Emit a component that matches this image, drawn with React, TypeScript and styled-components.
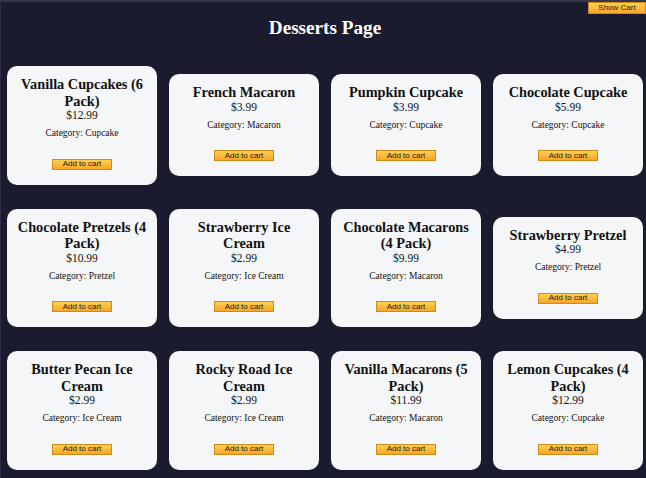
import React from "react";
import styled, { createGlobalStyle } from "styled-components";

const GlobalStyle = createGlobalStyle`
  html, body {
    margin: 0;
    padding: 0;
    background: #1b1b2f;
  }
  body {
    font-family: "Liberation Serif", "Times New Roman", serif;
  }
`;

const Page = styled.div`
  position: relative;
  box-sizing: border-box;
  width: 646px;
  min-height: 478px;
  background: #1b1b2f;
  border-top: 2px solid #35354b;
  border-left: 1px solid #2c2c42;
  padding: 0 3px 0 6px;
`;

const Heading = styled.h1`
  margin: 14.5px 0 27.5px;
  font-family: "Liberation Serif", "Times New Roman", serif;
  font-weight: bold;
  font-size: 19.2px;
  line-height: 22px;
  color: #ffffff;
  text-align: center;
`;

const OrangeButton = styled.button`
  box-sizing: border-box;
  margin: 0;
  padding: 0;
  border: 1px solid #cf8a19;
  background: linear-gradient(#ffd04f, #f7a52a);
  color: #222;
  font-family: "Liberation Sans", Arial, sans-serif;
  font-size: 8px;
  line-height: 1;
  cursor: pointer;
  display: flex;
  align-items: center;
  justify-content: center;
`;

const CartButton = styled(OrangeButton)`
  position: absolute;
  top: 0;
  right: 0;
  width: 58px;
  height: 12px;
`;

const Grid = styled.div`
  display: grid;
  grid-template-columns: repeat(4, 150px);
  column-gap: 12px;
  row-gap: 24px;
  align-items: center;
`;

const Card = styled.div`
  box-sizing: border-box;
  width: 150px;
  background: #f5f6f8;
  border-radius: 10px;
  padding: 10px 8px 15px;
  display: flex;
  flex-direction: column;
  align-items: center;
  text-align: center;
  color: #111;
`;

const Title = styled.h3`
  margin: 0;
  font-size: 14.3px;
  line-height: 16.5px;
  font-weight: bold;
`;

const Price = styled.div`
  font-size: 11.5px;
  line-height: 13px;
`;

const Category = styled.p`
  margin: 6px 0 0;
  font-size: 9.5px;
  line-height: 11px;
`;

const AddButton = styled(OrangeButton)`
  margin-top: 19.5px;
  width: 60px;
  height: 11px;
`;

type Item = { name: string; price: string; category: string };

const items: Item[] = [
  { name: "Vanilla Cupcakes (6 Pack)", price: "$12.99", category: "Cupcake" },
  { name: "French Macaron", price: "$3.99", category: "Macaron" },
  { name: "Pumpkin Cupcake", price: "$3.99", category: "Cupcake" },
  { name: "Chocolate Cupcake", price: "$5.99", category: "Cupcake" },
  { name: "Chocolate Pretzels (4 Pack)", price: "$10.99", category: "Pretzel" },
  { name: "Strawberry Ice Cream", price: "$2.99", category: "Ice Cream" },
  { name: "Chocolate Macarons (4 Pack)", price: "$9.99", category: "Macaron" },
  { name: "Strawberry Pretzel", price: "$4.99", category: "Pretzel" },
  { name: "Butter Pecan Ice Cream", price: "$2.99", category: "Ice Cream" },
  { name: "Rocky Road Ice Cream", price: "$2.99", category: "Ice Cream" },
  { name: "Vanilla Macarons (5 Pack)", price: "$11.99", category: "Macaron" },
  { name: "Lemon Cupcakes (4 Pack)", price: "$12.99", category: "Cupcake" },
];

export default function App() {
  return (
    <>
      <GlobalStyle />
      <Page>
        <CartButton>Show Cart</CartButton>
        <Heading>Desserts Page</Heading>
        <Grid>
          {items.map((it) => (
            <Card key={it.name}>
              <Title>{it.name}</Title>
              <Price>{it.price}</Price>
              <Category>Category: {it.category}</Category>
              <AddButton>Add to cart</AddButton>
            </Card>
          ))}
        </Grid>
      </Page>
    </>
  );
}
